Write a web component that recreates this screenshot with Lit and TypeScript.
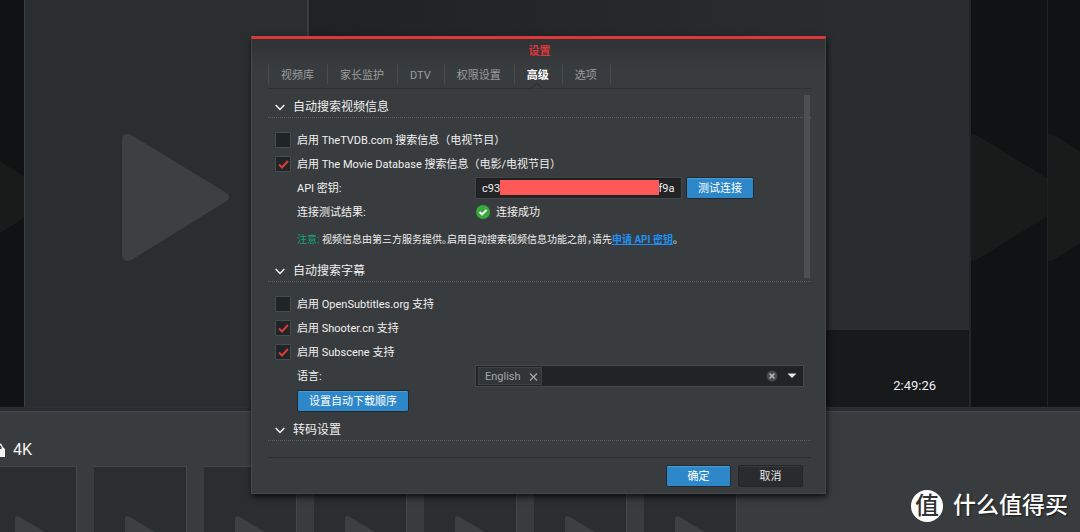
import { LitElement, html, css } from "lit";
import { customElement } from "lit/decorators.js";

@customElement("play-mark")
class PlayMark extends LitElement {
  static styles = css`
    :host { display: block; color: #3d3f40; }
    svg { display: block; width: 100%; height: auto; }
  `;
  render() {
    return html`<svg viewBox="0 0 107 127" aria-hidden="true">
      <path fill="currentColor" d="M0 6 Q0 0 6 0 Q8 0 11 2 L103 58 Q107 60 107 63 Q107 66 103 68 L11 125 Q8 127 5 127 Q0 126 0 121Z"/>
    </svg>`;
  }
}

@customElement("check-row")
class CheckRow extends LitElement {
  static properties = { label: {}, checked: { type: Boolean } };
  declare label: string;
  declare checked: boolean;
  static styles = css`
    :host { display: block; }
    .row { display: flex; align-items: center; gap: 6px; height: 24px; }
    .box {
      appearance: none; box-sizing: border-box; flex: none; width: 16px; height: 16px; margin: 0;
      border: 1px solid #4a4d50; border-radius: 1px; background: #1f2427;
    }
    .wrap { display: grid; place-items: center; }
    .wrap > * { grid-area: 1 / 1; }
    .tick { width: 11px; height: 9px; pointer-events: none; visibility: hidden; }
    .box:checked + .tick { visibility: visible; }
    .text { padding-top: 2px; }
  `;
  render() {
    return html`<label class="row">
      <span class="wrap">
        <input class="box" type="checkbox" .checked=${this.checked} />
        <svg class="tick" viewBox="0 0 11 9"><path d="M1 4.6 L4 7.4 L10 1" fill="none" stroke="#dc3a3a" stroke-width="2.1"/></svg>
      </span>
      <span class="text">${this.label}</span>
    </label>`;
  }
}

@customElement("section-head")
class SectionHead extends LitElement {
  static styles = css`
    :host { display: block; }
    .head {
      box-sizing: border-box; display: flex; align-items: center; gap: 8px; width: 100%; height: 23px; padding: 2px 0 0 7px;
      background: none; border: 0; border-bottom: 1px dotted #5c5f62;
      color: #f0f0f0; font: inherit; font-size: 12px; line-height: 20px; text-align: left;
    }
    svg { width: 10px; height: 7px; }
  `;
  render() {
    return html`<button class="head" type="button" aria-expanded="true">
      <svg viewBox="0 0 10 7" aria-hidden="true"><path d="M.7 1 L5 5.4 L9.3 1" fill="none" stroke="#f4f4f4" stroke-width="1.5"/></svg>
      <slot></slot>
    </button>`;
  }
}

@customElement("app-root")
class AppRoot extends LitElement {
  static styles = css`
    :host {
      display: block; position: relative; min-height: 100vh; overflow: hidden;
      background: #393c3e; color: #f0f0f0;
      font: 11px/16px Roboto, "Noto Sans CJK SC", sans-serif;
    }
    * { box-sizing: border-box; }
    button, input, select { font: inherit; }

    .page { display: flex; flex-direction: column; height: 100vh; }
    .stage {
      display: grid; grid-template-columns: 24px 285px 1fr 77px 32px;
      height: 408px; background: #111214; border-bottom: 1px solid #2f3033;
    }
    .side { overflow: hidden; padding-top: 134px; border-right: 1px solid #202123; }
    .side play-mark { width: 107px; margin-left: -4px; color: #191a1a; }
    .side.first { border: 0; }
    .side.first play-mark { margin-left: -53px; }
    .side.last { border: 0; }
    .cover { background: #2b2e30; border: 1px solid #3b3e40; border-width: 0 2px 0 1px; padding: 134px 0 0 97px; }
    .cover play-mark { width: 107px; }
    .detail { display: flex; flex-direction: column; border-right: 2px solid #242528; }
    .still { height: 330px; background: linear-gradient(90deg, #202124, #2b2c30 80%); }
    .meta { flex: 1; padding: 48px 33px 0; background: #18191b; font-size: 13px; text-align: right; }

    .shelf { flex: 1; min-height: 0; overflow: hidden; border-top: 3px solid #2a2b30; }
    .shelf-in { border-top: 1px solid #45484a; }
    .shelf-title { display: flex; align-items: center; gap: 8px; height: 54px; padding-top: 22px; font-size: 16px; }
    .shelf-title svg { width: 12px; height: 16px; margin-left: -7px; }
    .thumbs { display: flex; gap: 17px; margin-left: -16px; }
    .thumb { flex: none; width: 93px; height: 140px; padding: 49px 0 0 31px; background: #2b2e30; border: 1px solid #45484a; border-width: 1px 1px 0 0; }
    .thumb play-mark { width: 48px; }

    .dialog {
      position: absolute; top: 36px; left: calc(50% - 289px); width: 575px;
      display: flex; flex-direction: column; padding: 0 14px 6px 16px;
      background: linear-gradient(#303235, #393c3e 30px);
      border: 1px solid #45484a; border-top: 3px solid #dc3838;
      box-shadow: 1px 3px 6px rgba(0, 0, 0, .75);
    }
    .title { margin: 0; height: 25px; color: #dc3838; font-size: 11px; line-height: 26px; font-weight: 700; text-align: center; }
    .tabs { display: flex; height: 25px; border-bottom: 1px solid #2d2f31; }
    .tab {
      position: relative; height: 20px; padding: 2px 13px 0 12px; background: none;
      border: 0; border-left: 1px solid #4a4d4f; color: #9a9c9d; line-height: 20px;
    }
    .tab:last-child { border-right: 1px solid #4a4d4f; }
    .tab.on { color: #fff; font-weight: 700; }
    .notch { position: absolute; left: 50%; top: 19px; width: 12px; height: 6px; margin-left: -7px; }

    .body { position: relative; display: flex; flex-direction: column; height: 369px; padding-top: 6px; border-bottom: 1px solid #2b2d2f; }
    .bar { position: absolute; top: 6px; right: 1px; width: 6px; height: 183px; background: #4d5053; }
    .group { display: flex; flex-direction: column; padding: 10px 7px 7px; }
    .group.tight { padding-bottom: 4px; }
    .line { display: grid; grid-template-columns: 178px 1fr; align-items: center; height: 24px; margin-left: 22px; }
    .line label, .said { padding-top: 2px; }
    .inline { display: flex; align-items: center; gap: 4px; }
    .field { position: relative; width: 207px; height: 22px; background: #222325; border: 1px solid #45484a; box-shadow: inset 1px 1px #1a1b1c; }
    .key { display: block; width: 100%; height: 20px; padding: 1px 4px 0 6px; border: 0; background: none; color: #f0f0f0; outline: 0; }
    .mask { position: absolute; left: 24px; top: 2px; width: 159px; height: 15px; background: #ff5858; }
    .btn {
      height: 22px; padding: 1px 11px 0; border: 1px solid #26292b; border-radius: 2px;
      background: #2d87c9; color: #fff; line-height: 20px; box-shadow: inset 0 1px #4a9bd6;
    }
    .btn.dark { background: #2a2b2d; color: #e4e4e4; box-shadow: inset 0 1px #38393b; border-color: #242628; }
    .result { display: flex; align-items: center; gap: 6px; padding-left: 1px; }
    .result svg { width: 14px; height: 14px; }
    .note { margin: 0 0 0 22px; height: 28px; font-size: 10px; line-height: 32px; white-space: nowrap; font-feature-settings: "halt"; }
    .hint { color: #10a670; }
    .link { color: #1e90f5; font-weight: 700; }
    .combo {
      display: flex; align-items: center; width: 329px; height: 22px; padding: 0 6px 0 2px;
      background: #222325; border: 1px solid #45484a;
    }
    .tag { display: flex; align-items: center; gap: 8px; height: 18px; padding: 1px 3px 0 6px; background: #323538; border: 1px solid #3f4244; color: #a4a6a8; }
    .pick { flex: 1; min-width: 0; height: 18px; border: 0; background: none; appearance: none; color: #a4a6a8; outline: 0; }
    .bare { display: grid; padding: 0; border: 0; background: none; }
    .bare svg { display: block; }
    .caret { width: 10px; height: 6px; margin-left: 9px; }
    .order { display: flex; align-items: center; height: 26px; margin-left: 22px; }
    .actions { display: flex; justify-content: flex-end; gap: 7px; padding: 7px 8px 0 0; }
    .actions .btn { width: 65px; }

    .brand { position: absolute; right: 12px; bottom: 10px; display: flex; align-items: center; gap: 10px; color: #fff; font-size: 23px; line-height: 32px; text-shadow: 1px 1px 2px rgba(0, 0, 0, .6); font-weight: 500; }
    .seal { display: grid; place-items: center; width: 32px; height: 32px; border-radius: 50%; background: #fff; color: #333; font-size: 24px; text-shadow: none; }
  `;

  private tabs = ["视频库", "家长监护", "DTV", "权限设置", "高级", "选项"];
  private key = "c93" + "0".repeat(25) + "ff9a";

  render() {
    return html`
      <div class="page">
        <div class="stage">
          <div class="side first"><play-mark></play-mark></div>
          <div class="cover"><play-mark></play-mark></div>
          <div class="detail"><div class="still"></div><div class="meta">2:49:26</div></div>
          <div class="side"><play-mark></play-mark></div>
          <div class="side last"><play-mark></play-mark></div>
        </div>
        <div class="shelf"><div class="shelf-in">
          <div class="shelf-title">
            <svg viewBox="0 0 12 16" aria-hidden="true"><path fill="#f4f4f4" fill-rule="evenodd" d="M0 7 H1 V5.5 Q1 1 5.500 1 Q9 1 9.800 5 L12 7 V15 H0Z M3 7 H8.500 V5.500 Q8.500 3 5.700 3 Q3 3 3 5.500Z"/></svg>
            <span>4K</span>
          </div>
          <div class="thumbs">
            ${[0, 1, 2, 3, 4, 5, 6].map(() => html`<div class="thumb"><play-mark></play-mark></div>`)}
          </div>
        </div></div>
      </div>

      <div class="dialog" role="dialog" aria-labelledby="title">
        <h1 class="title" id="title">设置</h1>
        <div class="tabs" role="tablist">
          ${this.tabs.map((t) => t === "高级"
            ? html`<button class="tab on" role="tab" aria-selected="true">${t}<svg class="notch" viewBox="0 0 12 6" aria-hidden="true"><path d="M0 5.500 L6 .5 L12 5.500" fill="#393c3e" stroke="#2b2d2f"/></svg></button>`
            : html`<button class="tab" role="tab" aria-selected="false">${t}</button>`)}
        </div>
        <div class="body">
          <section-head>自动搜索视频信息</section-head>
          <div class="group">
            <check-row label="启用 TheTVDB.com 搜索信息（电视节目）"></check-row>
            <check-row label="启用 The Movie Database 搜索信息（电影/电视节目）" checked></check-row>
            <div class="line">
              <label for="key">API 密钥:</label>
              <div class="inline">
                <div class="field"><input class="key" id="key" type="text" .value=${this.key} /><span class="mask"></span></div>
                <button class="btn" type="button">测试连接</button>
              </div>
            </div>
            <div class="line">
              <label for="result">连接测试结果:</label>
              <output class="result" id="result">
                <svg viewBox="0 0 14 14" aria-hidden="true"><circle cx="7" cy="7" r="7" fill="#37a93c"/><path d="M3.500 7 L6 9.500 L10.600 4.800" fill="none" stroke="#fff" stroke-width="1.900"/></svg>
                <span class="said">连接成功</span>
              </output>
            </div>
            <p class="note"><span class="hint">注意:</span> 视频信息由第三方服务提供。启用自动搜索视频信息功能之前，请先<a class="link" href="#">申请 API 密钥</a>。</p>
          </div>
          <section-head>自动搜索字幕</section-head>
          <div class="group tight">
            <check-row label="启用 OpenSubtitles.org 支持"></check-row>
            <check-row label="启用 Shooter.cn 支持" checked></check-row>
            <check-row label="启用 Subscene 支持" checked></check-row>
            <div class="line">
              <label for="lang">语言:</label>
              <div class="combo">
                <span class="tag">English
                  <button class="bare" type="button" aria-label="English"><svg width="9" height="9" viewBox="0 0 9 9"><path d="M1 1.500 L8 8.500 M8 1.500 L1 8.500" stroke="#a4a6a8" stroke-width="1.300"/></svg></button>
                </span>
                <select class="pick" id="lang"><option></option></select>
                <button class="bare" type="button" aria-label="清除"><svg width="12" height="12" viewBox="0 0 12 12"><circle cx="6" cy="6" r="5.500" fill="#46494b"/><path d="M3.500 3.500 L8.500 8.500 M8.500 3.500 L3.500 8.500" stroke="#b4b6b8" stroke-width="1.700"/></svg></button>
                <svg class="caret" viewBox="0 0 10 6" aria-hidden="true"><path fill="#e8e8e8" d="M.5 .5 H9.500 L5 5Z"/></svg>
              </div>
            </div>
            <div class="order"><button class="btn" type="button">设置自动下载顺序</button></div>
          </div>
          <section-head>转码设置</section-head>
          <div class="bar"></div>
        </div>
        <div class="actions">
          <button class="btn" type="button">确定</button>
          <button class="btn dark" type="button">取消</button>
        </div>
      </div>

      <div class="brand"><span class="seal">值</span><span>什么值得买</span></div>
    `;
  }
}
